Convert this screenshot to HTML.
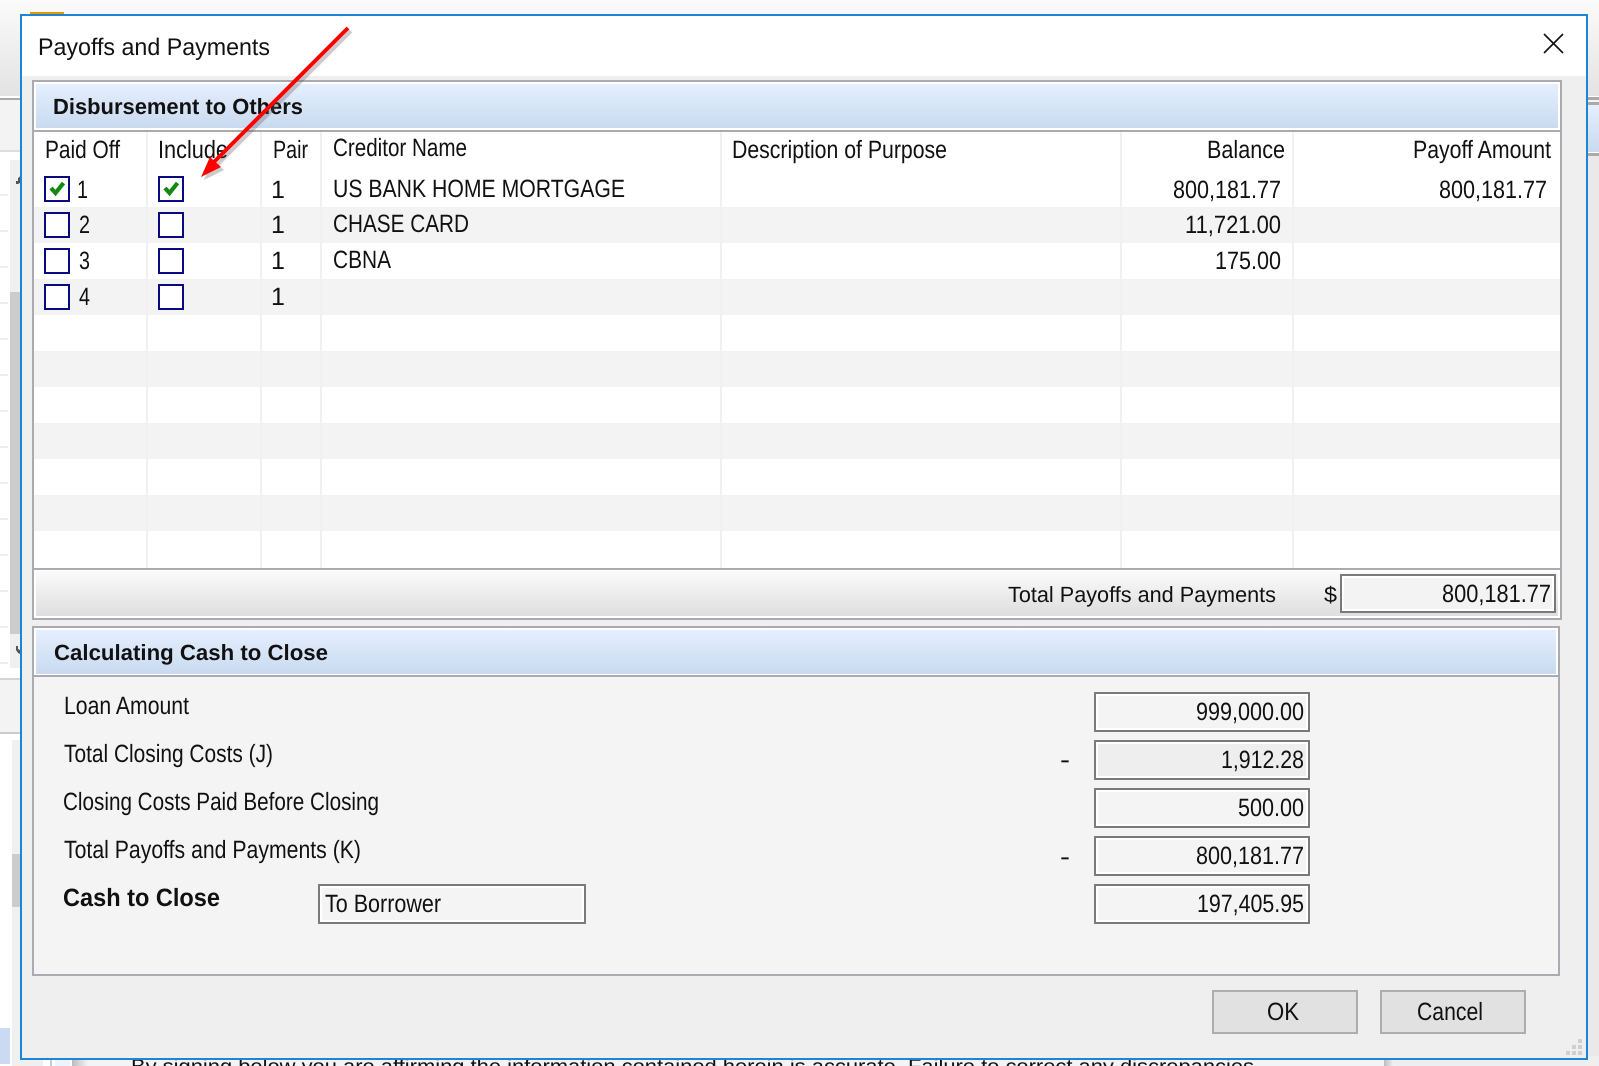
<!DOCTYPE html>
<html>
<head>
<meta charset="utf-8">
<title>Payoffs and Payments</title>
<style>
html,body{margin:0;padding:0;background:#fff;width:1599px;height:1066px;overflow:hidden}
svg{display:block}
text{font-family:"Liberation Sans",Arial,sans-serif;fill:#111;text-rendering:geometricPrecision}
.r{font-size:25px}
.b{font-weight:bold}
.s{font-size:22px}
</style>
</head>
<body>
<svg xmlns="http://www.w3.org/2000/svg" width="1599" height="1066" viewBox="0 0 1599 1066">
<defs>
<linearGradient id="top" x1="0" y1="0" x2="0" y2="1"><stop offset="0" stop-color="#fbfbfb"/><stop offset="1" stop-color="#e3e3e3"/></linearGradient>
<linearGradient id="blue" x1="0" y1="0" x2="0" y2="1"><stop offset="0" stop-color="#e5effe"/><stop offset="1" stop-color="#c9daf0"/></linearGradient>
<linearGradient id="foot" x1="0" y1="0" x2="0" y2="1"><stop offset="0" stop-color="#fbfbfb"/><stop offset="1" stop-color="#dedede"/></linearGradient>
<linearGradient id="bar" x1="0" y1="0" x2="1" y2="0"><stop offset="0" stop-color="#bbb"/><stop offset="1" stop-color="#f4f4f4"/></linearGradient>
</defs>

<!-- background application -->
<g shape-rendering="crispEdges">
<rect width="1599" height="1066" fill="#fff"/>
<rect x="0" y="0" width="1599" height="96" fill="url(#top)"/>
<rect x="30" y="12" width="34" height="3" fill="#e29a00"/>
<rect x="0" y="98" width="20" height="2" fill="#aaa"/>
<rect x="0" y="100" width="20" height="50" fill="#f3f3f3"/>
<rect x="0" y="150" width="20" height="2" fill="#ddd"/>
<rect x="10" y="160" width="10" height="508" fill="#f0f0f0"/>
<rect x="10" y="292" width="10" height="342" fill="#ccc"/>
<path d="M16 181 L18 181 L18 178 L20 176 L20 183 L18 184 L16 184 Z" fill="#555"/>
<path d="M16 646 L18 646 L18 649 L20 650 L20 654 L18 653 L16 650 Z" fill="#555"/>
<g fill="#eee">
<rect x="0" y="194" width="8" height="2"/><rect x="0" y="230" width="8" height="2"/><rect x="0" y="266" width="8" height="2"/><rect x="0" y="302" width="8" height="2"/><rect x="0" y="338" width="8" height="2"/><rect x="0" y="374" width="8" height="2"/><rect x="0" y="410" width="8" height="2"/><rect x="0" y="446" width="8" height="2"/><rect x="0" y="482" width="8" height="2"/><rect x="0" y="518" width="8" height="2"/><rect x="0" y="554" width="8" height="2"/><rect x="0" y="590" width="8" height="2"/><rect x="0" y="626" width="8" height="2"/><rect x="0" y="662" width="8" height="2"/>
</g>
<rect x="0" y="678" width="20" height="2" fill="#d5d5d5"/>
<rect x="0" y="680" width="20" height="52" fill="#f3f3f3"/>
<rect x="0" y="732" width="20" height="2" fill="#ccc"/>
<rect x="12" y="740" width="10" height="326" fill="#f0f0f0"/>
<rect x="12" y="854" width="10" height="53" fill="#ccc"/>
<rect x="0" y="1028" width="10" height="36" fill="#c9daf2"/>
<rect x="12" y="1056" width="31" height="10" fill="#f0f0f0"/>
<rect x="50" y="1056" width="2" height="10" fill="#ccc"/>
<rect x="55" y="1056" width="15" height="10" fill="#eef3fd"/>
<rect x="72" y="1056" width="16" height="10" fill="url(#bar)"/>
<rect x="88" y="1056" width="1296" height="10" fill="#f4f4f4"/>
<rect x="1384" y="1056" width="10" height="10" fill="url(#bar)"/>
<rect x="1394" y="1056" width="205" height="10" fill="#efefef"/>
<!-- right strip -->
<rect x="1588" y="97" width="11" height="3" fill="#aaa"/>
<rect x="1588" y="100" width="11" height="2" fill="#f3f3f3"/>
<rect x="1588" y="102" width="11" height="3" fill="#aaa"/>
<rect x="1588" y="105" width="11" height="47" fill="url(#blue)"/>
<rect x="1588" y="153" width="11" height="3" fill="#aaa"/>
<rect x="1588" y="156" width="11" height="900" fill="#e9e9e9"/>
</g>
<text x="131" y="1073" font-size="20" textLength="1123" lengthAdjust="spacingAndGlyphs">By signing below you are affirming the information contained herein is accurate. Failure to correct any discrepancies</text>

<!-- window -->
<g shape-rendering="crispEdges">
<rect x="20" y="14" width="1568" height="1046" fill="#1d85d6"/>
<rect x="22" y="16" width="1564" height="1042" fill="#efefef"/>
<rect x="22" y="16" width="1564" height="60" fill="#fff"/>
</g>
<text x="38" y="55" font-size="24" textLength="232" lengthAdjust="spacingAndGlyphs">Payoffs and Payments</text>
<path d="M1544 34 L1563 53 M1563 34 L1544 53" stroke="#111" stroke-width="1.6" fill="none"/>

<!-- Disbursement panel -->
<g shape-rendering="crispEdges">
<rect x="32" y="80" width="1530" height="540" fill="#aaabb0"/>
<rect x="34" y="82" width="1526" height="48" fill="#fff"/>
<rect x="36" y="84" width="1522" height="44" fill="url(#blue)"/>
<rect x="34" y="132" width="1526" height="436" fill="#fff"/>
<g fill="#f3f3f3">
<rect x="34" y="207" width="1526" height="36"/>
<rect x="34" y="279" width="1526" height="36"/>
<rect x="34" y="351" width="1526" height="36"/>
<rect x="34" y="423" width="1526" height="36"/>
<rect x="34" y="495" width="1526" height="36"/>
</g>
<g fill="#f0f0f0">
<rect x="146" y="132" width="2" height="436"/>
<rect x="260" y="132" width="2" height="436"/>
<rect x="320" y="132" width="2" height="436"/>
<rect x="720" y="132" width="2" height="436"/>
<rect x="1120" y="132" width="2" height="436"/>
<rect x="1292" y="132" width="2" height="436"/>
</g>
<rect x="34" y="570" width="1526" height="48" fill="#fff"/>
<rect x="36" y="571" width="1522" height="45" fill="url(#foot)"/>
</g>
<text x="53" y="114" class="b" font-size="22" textLength="250" lengthAdjust="spacingAndGlyphs">Disbursement to Others</text>

<text x="45" y="158" class="r" textLength="75" lengthAdjust="spacingAndGlyphs">Paid Off</text>
<text x="158" y="158" class="r" textLength="70" lengthAdjust="spacingAndGlyphs">Include</text>
<text x="273" y="158" class="r" textLength="35" lengthAdjust="spacingAndGlyphs">Pair</text>
<text x="333" y="156" class="r" textLength="134" lengthAdjust="spacingAndGlyphs">Creditor Name</text>
<text x="732" y="158" class="r" textLength="215" lengthAdjust="spacingAndGlyphs">Description of Purpose</text>
<text x="1207" y="158" class="r" textLength="78" lengthAdjust="spacingAndGlyphs">Balance</text>
<text x="1413" y="158" class="r" textLength="138" lengthAdjust="spacingAndGlyphs">Payoff Amount</text>

<!-- checkboxes -->
<g fill="#fff" stroke="#0a0a80" stroke-width="2" shape-rendering="crispEdges">
<rect x="45" y="177" width="24" height="24"/><rect x="159" y="177" width="24" height="24"/>
<rect x="45" y="213" width="24" height="24"/><rect x="159" y="213" width="24" height="24"/>
<rect x="45" y="249" width="24" height="24"/><rect x="159" y="249" width="24" height="24"/>
<rect x="45" y="285" width="24" height="24"/><rect x="159" y="285" width="24" height="24"/>
</g>
<path d="M51 188 L55.5 193 L63.5 183" stroke="#128a12" stroke-width="4.2" fill="none"/>
<path d="M165 188 L169.5 193 L177.5 183" stroke="#128a12" stroke-width="4.2" fill="none"/>

<text x="77" y="198" class="r" textLength="11" lengthAdjust="spacingAndGlyphs">1</text>
<text x="79" y="233" class="r" textLength="11" lengthAdjust="spacingAndGlyphs">2</text>
<text x="79" y="269" class="r" textLength="11" lengthAdjust="spacingAndGlyphs">3</text>
<text x="79" y="305" class="r" textLength="11" lengthAdjust="spacingAndGlyphs">4</text>
<text x="271" y="198" class="r">1</text>
<text x="271" y="233" class="r">1</text>
<text x="271" y="269" class="r">1</text>
<text x="271" y="305" class="r">1</text>
<text x="333" y="197" class="r" textLength="292" lengthAdjust="spacingAndGlyphs">US BANK HOME MORTGAGE</text>
<text x="333" y="232" class="r" textLength="136" lengthAdjust="spacingAndGlyphs">CHASE CARD</text>
<text x="333" y="268" class="r" textLength="58" lengthAdjust="spacingAndGlyphs">CBNA</text>
<text x="1173" y="198" class="r" textLength="108" lengthAdjust="spacingAndGlyphs">800,181.77</text>
<text x="1439" y="198" class="r" textLength="108" lengthAdjust="spacingAndGlyphs">800,181.77</text>
<text x="1185" y="233" class="r" textLength="96" lengthAdjust="spacingAndGlyphs">11,721.00</text>
<text x="1215" y="269" class="r" textLength="66" lengthAdjust="spacingAndGlyphs">175.00</text>

<!-- footer -->
<text x="1008" y="602" class="s" textLength="268" lengthAdjust="spacingAndGlyphs">Total Payoffs and Payments</text>
<text x="1324" y="602" class="s" textLength="13" lengthAdjust="spacingAndGlyphs">$</text>
<g shape-rendering="crispEdges">
<rect x="1340" y="574" width="216" height="39" fill="#7a7a7a"/>
<rect x="1342" y="576" width="212" height="35" fill="#fff"/>
<rect x="1344" y="578" width="208" height="31" fill="#f3f3f3"/>
</g>
<text x="1442" y="602" class="r" textLength="109" lengthAdjust="spacingAndGlyphs">800,181.77</text>

<!-- Cash to close panel -->
<g shape-rendering="crispEdges">
<rect x="32" y="626" width="1528" height="350" fill="#aaabb0"/>
<rect x="34" y="628" width="1524" height="47" fill="#fff"/>
<rect x="36" y="630" width="1520" height="44" fill="url(#blue)"/>
<rect x="34" y="677" width="1524" height="297" fill="#f4f4f4"/>
<g>
<rect x="1094" y="692" width="216" height="40" fill="#7a7a7a"/><rect x="1096" y="694" width="212" height="36" fill="#fff"/><rect x="1098" y="696" width="208" height="32" fill="#f4f4f4"/>
<rect x="1094" y="740" width="216" height="40" fill="#7a7a7a"/><rect x="1096" y="742" width="212" height="36" fill="#fff"/><rect x="1098" y="744" width="208" height="32" fill="#eeeeee"/>
<rect x="1094" y="788" width="216" height="40" fill="#7a7a7a"/><rect x="1096" y="790" width="212" height="36" fill="#fff"/><rect x="1098" y="792" width="208" height="32" fill="#f4f4f4"/>
<rect x="1094" y="836" width="216" height="40" fill="#7a7a7a"/><rect x="1096" y="838" width="212" height="36" fill="#fff"/><rect x="1098" y="840" width="208" height="32" fill="#f4f4f4"/>
<rect x="1094" y="884" width="216" height="40" fill="#7a7a7a"/><rect x="1096" y="886" width="212" height="36" fill="#fff"/><rect x="1098" y="888" width="208" height="32" fill="#f4f4f4"/>
<rect x="318" y="884" width="268" height="40" fill="#7a7a7a"/><rect x="320" y="886" width="264" height="36" fill="#fff"/><rect x="322" y="888" width="260" height="32" fill="#f4f4f4"/>
</g>
</g>
<text x="54" y="660" class="b" font-size="22" textLength="274" lengthAdjust="spacingAndGlyphs">Calculating Cash to Close</text>
<text x="64" y="714" class="r" textLength="125" lengthAdjust="spacingAndGlyphs">Loan Amount</text>
<text x="64" y="762" class="r" textLength="209" lengthAdjust="spacingAndGlyphs">Total Closing Costs (J)</text>
<text x="63" y="810" class="r" textLength="316" lengthAdjust="spacingAndGlyphs">Closing Costs Paid Before Closing</text>
<text x="64" y="858" class="r" textLength="297" lengthAdjust="spacingAndGlyphs">Total Payoffs and Payments (K)</text>
<text x="63" y="906" class="r b" textLength="157" lengthAdjust="spacingAndGlyphs">Cash to Close</text>
<text x="325" y="912" class="r" textLength="116" lengthAdjust="spacingAndGlyphs">To Borrower</text>
<text x="1196" y="720" class="r" textLength="108" lengthAdjust="spacingAndGlyphs">999,000.00</text>
<text x="1221" y="768" class="r" textLength="83" lengthAdjust="spacingAndGlyphs">1,912.28</text>
<text x="1238" y="816" class="r" textLength="66" lengthAdjust="spacingAndGlyphs">500.00</text>
<text x="1196" y="864" class="r" textLength="108" lengthAdjust="spacingAndGlyphs">800,181.77</text>
<text x="1197" y="912" class="r" textLength="107" lengthAdjust="spacingAndGlyphs">197,405.95</text>
<text x="1060" y="768" class="r" textLength="10" lengthAdjust="spacingAndGlyphs">-</text>
<text x="1060" y="865" class="r" textLength="10" lengthAdjust="spacingAndGlyphs">-</text>

<!-- buttons -->
<g shape-rendering="crispEdges">
<rect x="1212" y="990" width="146" height="44" fill="#adadad"/><rect x="1214" y="992" width="142" height="40" fill="#e1e1e1"/>
<rect x="1380" y="990" width="146" height="44" fill="#adadad"/><rect x="1382" y="992" width="142" height="40" fill="#e1e1e1"/>
<g fill="#cfcfcf">
<rect x="1578" y="1039" width="4" height="4"/>
<rect x="1572" y="1045" width="4" height="4"/><rect x="1578" y="1045" width="4" height="4"/>
<rect x="1566" y="1051" width="4" height="4"/><rect x="1572" y="1051" width="4" height="4"/><rect x="1578" y="1051" width="4" height="4"/>
</g>
</g>
<text x="1267" y="1020" class="r" textLength="32" lengthAdjust="spacingAndGlyphs">OK</text>
<text x="1417" y="1020" class="r" textLength="66" lengthAdjust="spacingAndGlyphs">Cancel</text>

<!-- red arrow -->
<g transform="translate(3 3)" opacity=".3">
<path d="M348 28 L213 163" stroke="#555" stroke-width="4" fill="none"/>
<path d="M201 177 L210 157 L221 167 Z" fill="#555"/>
</g>
<path d="M348 28 L213 163" stroke="#ff0000" stroke-width="4" fill="none"/>
<path d="M201 177 L210 157 L221 167 Z" fill="#ff0000"/>
</svg>
</body>
</html>
